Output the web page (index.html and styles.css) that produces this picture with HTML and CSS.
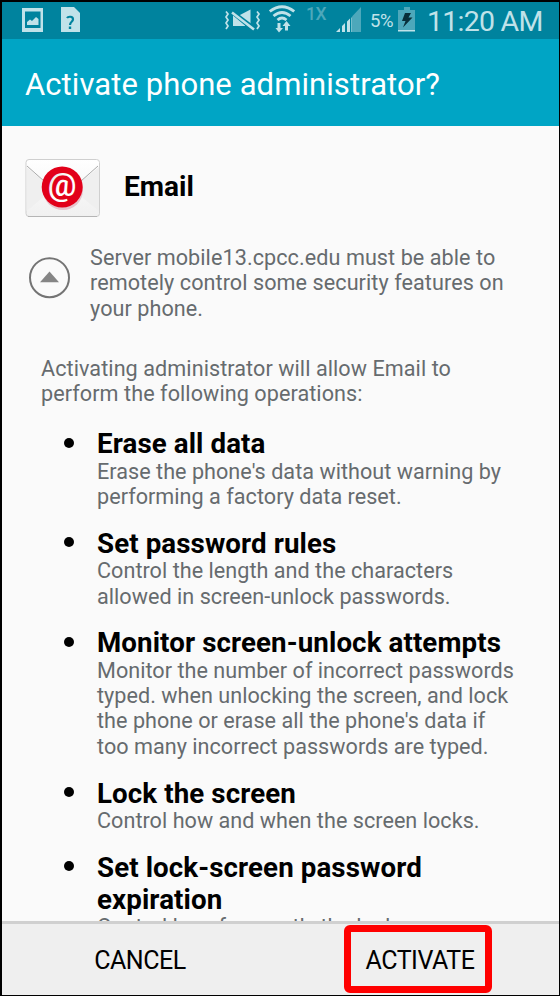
FILE: index.html
```html
<!DOCTYPE html>
<html lang="en">
<head>
<meta charset="utf-8">
<title>Activate phone administrator?</title>
<link rel="stylesheet" href="styles.css">
</head>
<body>
<div class="phone">
  <div class="status">
    <svg class="pic" width="22" height="24" viewBox="0 0 22 24"><path fill="#c0e2e9" fill-rule="evenodd" d="M0 0H21V24H0ZM3 3.500V20H18.500V3.500Z"/><path fill="#c0e2e9" d="M5 17V14L8 11.500L10 13L14 9L16.500 11V17Z"/></svg>
    <svg class="file" width="19" height="25" viewBox="0 0 19 25"><path fill="#c0e2e9" d="M0 0H13L19 6V25H0Z"/><path fill="none" stroke="#00839e" stroke-width="2.200" d="M6 11C7 9.300 12 9 12 12.200C12 15 9 14.500 9 18"/><path fill="#00839e" d="M7.800 19.500H10.200V22H7.800Z"/></svg>
    <svg class="mute" width="38" height="24" viewBox="0 0 38 24"><g fill="none" stroke="#c0e2e9" stroke-width="1.700"><path d="M1 2.500L3 5L1 8L3 11L1 14L3 17L1 20"/><path d="M32 2.500L34 5L32 8L34 11L32 14L34 17L32 20"/></g><path fill="#c0e2e9" d="M14 6.500L25.500 .5V15.500ZM8 6.500L20 16.500V17H8Z"/><path fill="none" stroke="#00839e" stroke-width="1.700" d="M9 2.800L30.500 19"/><path stroke="#c0e2e9" stroke-width="2.600" d="M7 3.500L29 20.500"/></svg>
    <svg class="wifi" width="26" height="28" viewBox="0 0 26 28"><g fill="none" stroke="#c0e2e9" stroke-width="2.800"><path d="M.8 6.500Q13-3 25.200 6.500"/><path d="M4.500 11Q13 4 21.500 11"/><path d="M8.500 15Q13 11 17.500 15"/></g><g fill="#c0e2e9"><path d="M8.500 18H11.500V23H14L10 27.500L6.500 23H8.500ZM16 25.500V21H13.500L17.500 16L21.500 21H19V25.500Z"/></g></svg>
    <span class="onex">1X</span>
    <svg class="signal" width="26" height="25" viewBox="0 0 26 25"><path fill="#4da8bb" d="M16 9.500L25 0V25H16Z"/><path fill="#c0e2e9" d="M0 25L4 21V25ZM6 19L9 16V25H6ZM11 14.500L14 11.500V25H11Z"/><path fill="#75bfcd" d="M15 11L16 10V25H15Z"/></svg>
    <span class="pct">5%</span>
    <svg class="battery" width="18" height="25" viewBox="0 0 18 25"><path fill="#4da8bb" d="M6 0H12V3H17V24H0V3H6Z"/><path fill="#c0e2e9" d="M0 23H17V24.500H0Z"/><path fill="#082f3a" d="M7 6H13L10.500 10.500H14.500L5 20.500L7.500 14H4Z"/></svg>
    <span class="time">11:20 AM</span>
  </div>
  <header><h1>Activate phone administrator?</h1></header>
  <main>
    <div class="app">
      <svg width="76" height="60" viewBox="0 0 76 60">
        <defs><linearGradient id="paper" x1="0" y1="0" x2="0" y2="1"><stop offset="0" stop-color="#fff"/><stop offset="1" stop-color="#f0f0f0"/></linearGradient><linearGradient id="silver" x1="0" y1="0" x2="1" y2="1"><stop offset="0" stop-color="#d8d8d8"/><stop offset=".5" stop-color="#fff"/></linearGradient></defs>
        <rect x="1" y="1.500" width="73.500" height="57" rx="3" fill="url(#paper)" stroke="#cfcfcf"/>
        <path fill="#efefef" d="M1.500 9L28 31L1.500 53ZM74 9L47 31L74 53Z"/>
        <path d="M2 8L28 31M73 8L47 31" stroke="#aaa" fill="none"/>
        <path d="M3 58.500H72" stroke="#b5b5b5"/>
        <circle cx="38" cy="32" r="20" fill="#e6c5cd"/>
        <circle cx="37.200" cy="29" r="20.500" fill="#e2001a"/>
        <text class="at" x="37" y="37.500" text-anchor="middle" fill="url(#silver)">@</text>
      </svg>
      <h2>Email</h2>
    </div>
    <div class="server">
      <svg width="42" height="42" viewBox="0 0 42 42"><circle cx="20.500" cy="20.700" r="19.500" fill="none" stroke="#747474" stroke-width="2"/><path fill="#858585" d="M11 25.200L20.500 14.500L30 25.200Z"/></svg>
      <p>Server mobile13.cpcc.edu must be able to<br>remotely control some security features on<br>your phone.</p>
    </div>
    <p class="intro">Activating administrator will allow Email to<br>perform the following operations:</p>
    <ul>
      <li><h3>Erase all data</h3><p>Erase the phone's data without warning by<br>performing a factory data reset.</p></li>
      <li><h3>Set password rules</h3><p>Control the length and the characters<br>allowed in screen-unlock passwords.</p></li>
      <li><h3>Monitor screen-unlock attempts</h3><p>Monitor the number of incorrect passwords<br>typed. when unlocking the screen, and lock<br>the phone or erase all the phone's data if<br>too many incorrect passwords are typed.</p></li>
      <li><h3>Lock the screen</h3><p>Control how and when the screen locks.</p></li>
      <li><h3>Set lock-screen password<br>expiration</h3><p>Control how frequently the lock-</p></li>
    </ul>
  </main>
  <footer>
    <button class="cancel">CANCEL</button>
    <button class="activate">ACTIVATE</button>
  </footer>
</div>
</body>
</html>
```
FILE: styles.css
```css
* { box-sizing: border-box; margin: 0; padding: 0; }
body { background: #000; font-family: Roboto, sans-serif; width: 560px; height: 996px; overflow: hidden; }
svg { display: block; flex: none; }
.phone { height: 996px; border: solid #000; border-width: 2px 1px 1px 2px; display: flex; flex-direction: column; background: #fafafa; white-space: nowrap; }
.status { height: 37px; flex: none; display: flex; align-items: flex-start; background: #00839e; color: #c0e2e9; }
.pic { margin: 6px 0 0 20px; }
.file { margin: 5px 0 0 17px; }
.mute { margin: 7px 0 0 145px; }
.wifi { margin: 3px 0 0 6px; }
.onex { width: 20px; margin: 2px 0 0 11px; font-size: 17.500px; line-height: 20px; font-weight: 500; letter-spacing: -.5px; color: #4da8bb; }
.signal { margin: 5px 0 0 10px; }
.pct { width: 24px; margin: 7px 0 0 8px; font-size: 18.500px; line-height: 24px; letter-spacing: -.5px; }
.battery { margin: 5px 0 0 4px; }
.time { margin: 2px 0 0 11px; font-size: 28.500px; line-height: 36px; font-weight: 400; letter-spacing: -.75px; }
header { height: 87px; flex: none; background: #00a5c5; color: #fff; padding: 28px 0 0 23px; }
h1 { font-size: 31px; line-height: 35px; font-weight: 400; letter-spacing: .08px; }
main { flex: 1; min-height: 0; overflow: hidden; padding-top: 32px; }
.app { display: flex; margin-left: 23px; gap: 23px; }
.at { font: 500 32px Roboto, sans-serif; }
h2 { font-size: 28px; line-height: 33px; font-weight: 700; margin-top: 12px; }
p { font-size: 21.600px; line-height: 25.300px; letter-spacing: .07px; color: #666b6e; }
.server { display: flex; gap: 19px; margin: 27px 0 0 27px; }
.server svg { margin-top: 12px; }
.intro { margin: 35px 0 0 39px; }
ul { list-style: none; margin: 22px 0 0 95px; }
li { position: relative; }
li::before { content: ""; position: absolute; left: -33px; top: 9.500px; width: 10px; height: 10px; border-radius: 50%; background: #000; }
h3 { font-size: 27.700px; line-height: 32.300px; font-weight: 700; letter-spacing: .1px; }
li p { margin: -2px 0 18.600px; letter-spacing: .03px; }
footer { height: 74px; flex: none; display: flex; border-top: 3px solid #d0d0d0; background: #efefef; }
button { border: 0; background: none; font: 25px/30px Roboto, sans-serif; letter-spacing: -.45px; color: #000; }
.cancel { width: 276px; padding-top: 2px; }
.activate { width: 148px; height: 68px; margin: 1px 0 0 66px; padding: 3px 0 0 4px; border: 7px solid #f00; border-radius: 6px; }
```
